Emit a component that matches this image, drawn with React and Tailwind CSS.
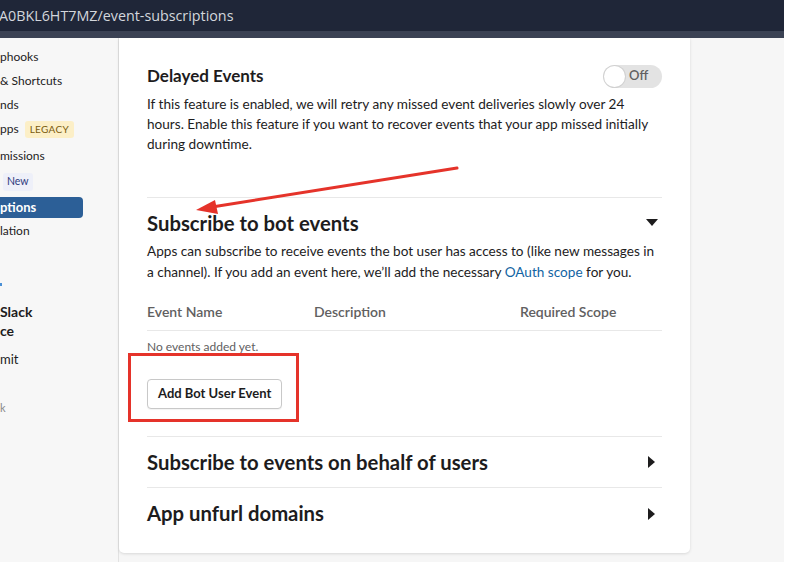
import { useState } from "react"

function Toggle({ on = false }) {
  return (
    <div className="relative flex h-[23px] w-[59px] items-center rounded-full bg-[#e3e3e3]">
      <span className="absolute left-[1px] top-[1px] h-[21px] w-[21px] rounded-full bg-white shadow-[0_0_0_1px_rgba(0,0,0,0.08)]" />
      <span className="ml-[26px] text-[13px] font-semibold text-[#616061]">{on ? "On" : "Off"}</span>
    </div>
  )
}

function Caret({ open }) {
  return open ? (
    <svg width="12" height="8" viewBox="0 0 12 8">
      <path d="M0 0h12L6 7z" fill="#1d1c1d" />
    </svg>
  ) : (
    <svg width="8" height="12" viewBox="0 0 8 12">
      <path d="M0 0v12l7-6z" fill="#1d1c1d" />
    </svg>
  )
}

function SideItem({ children, className = "" }) {
  return <div className={"flex h-[24px] items-center whitespace-nowrap text-[12px] text-[#1d1c1d] " + className}>{children}</div>
}

function Sidebar() {
  return (
    <aside className="w-[119px] shrink-0 overflow-hidden border-r border-[#e2e2e2] bg-[#f7f7f7] pt-[7px]">
      <SideItem>phooks</SideItem>
      <SideItem>&amp; Shortcuts</SideItem>
      <SideItem>nds</SideItem>
      <SideItem className="gap-[6px]">
        <span>pps</span>
        <span className="rounded-[3px] bg-[#fcefc7] px-[5px] py-[1px] text-[10px] tracking-[0.3px] text-[#7a5b0d]">LEGACY</span>
      </SideItem>
      <SideItem className="mt-[3px]">missions</SideItem>
      <SideItem className="mt-[2px]">
        <span className="ml-[3px] rounded-[3px] bg-[#eef0f9] px-[4px] py-[1px] text-[10.5px] text-[#2e3c80]">New</span>
      </SideItem>
      <div className="mt-[3px] flex h-[21px] w-[83px] items-center rounded-r-[4px] bg-[#2c5f97] text-[13px] font-bold text-white">ptions</div>
      <SideItem className="mt-[1px]">lation</SideItem>
      <div className="mt-[40px] h-[3px] w-[2px] bg-[#4a90d6]" />
      <div className="mt-[16px] text-[14px] font-bold leading-[19px] text-[#1d1c1d]">
        <div>Slack</div>
        <div>ce</div>
      </div>
      <SideItem className="mt-[8px] text-[13px]">mit</SideItem>
      <div className="mt-[28px] text-[11px] text-[#8a8a8a]">k</div>
    </aside>
  )
}

function Row({ title, last = false }) {
  return (
    <div className={"flex h-[51px] items-center justify-between " + (last ? "" : "border-b border-[#e8e8e8]")}>
      <h3 className="text-[20.3px] font-bold text-[#1d1c1d]">{title}</h3>
      <span className="mr-[6px]"><Caret open={false} /></span>
    </div>
  )
}

export default function App() {
  const [events] = useState([])

  return (
    <div className="relative h-[562px] w-[796px] overflow-hidden bg-white font-['Lato',sans-serif]">
      <div className="flex h-full w-[784px] flex-col">
        <div className="flex h-[31px] items-center bg-[#1f2638] font-['Open_Sans',sans-serif] text-[14.3px] text-[#d3d6dc]">
          <span className="-ml-[1px]">A0BKL6HT7MZ/event-subscriptions</span>
        </div>
        <div className="h-[7px] bg-[#3b4254]" />

        <div className="flex flex-1 overflow-hidden">
          <Sidebar />

          <main className="flex-1 bg-[#f6f6f6]">
            <div className="h-[515px] w-[571px] rounded-b-[5px] bg-white px-[28px] pt-[26px] shadow-[0_1px_3px_rgba(0,0,0,0.12)]">
              <section className="border-b border-[#e8e8e8] pb-[43px]">
                <div className="flex h-[24px] items-center justify-between">
                  <h3 className="text-[17px] font-bold text-[#1d1c1d]">Delayed Events</h3>
                  <Toggle />
                </div>
                <p className="mt-[6px] text-[13.6px] leading-[20px] text-[#1d1c1d]">
                  If this feature is enabled, we will retry any missed event deliveries slowly over 24 hours. Enable this feature if you want to recover events that your app missed initially during downtime.
                </p>
              </section>

              <section className="border-b border-[#e8e8e8] pb-[27px]">
                <div className="mt-[11px] flex h-[28px] items-center justify-between">
                  <h3 className="text-[20.3px] font-bold text-[#1d1c1d]">Subscribe to bot events</h3>
                  <span className="mr-[4px]"><Caret open /></span>
                </div>
                <p className="mt-[4px] text-[13.6px] leading-[21px] text-[#1d1c1d]">
                  Apps can subscribe to receive events the bot user has access to (like new messages in a channel). If you add an event here, we’ll add the necessary <span className="text-[#1264a3]">OAuth scope</span> for you.
                </p>

                <div className="mt-[19px] grid grid-cols-[167px_206px_1fr] border-b border-[#e8e8e8] pb-[8px] text-[14px] font-semibold leading-[20px] text-[#616061]">
                  <span>Event Name</span>
                  <span>Description</span>
                  <span>Required Scope</span>
                </div>
                {events.length === 0 && (
                  <p className="mt-[8px] text-[12px] leading-[16px] text-[#616061]">No events added yet.</p>
                )}
                <button className="mt-[24px] h-[30px] rounded-[4px] border border-[#c8c8c8] bg-white px-[10px] text-[13px] font-bold text-[#1d1c1d] shadow-[0_1px_1px_rgba(0,0,0,0.05)]">
                  Add Bot User Event
                </button>
              </section>

              <Row title="Subscribe to events on behalf of users" />
              <Row title="App unfurl domains" last />
            </div>
          </main>
        </div>
      </div>

      {/* annotations drawn over the screenshot */}
      <svg className="pointer-events-none absolute left-0 top-0" width="796" height="562">
        <line x1="457" y1="168" x2="212" y2="207" stroke="#e5332a" strokeWidth="3" strokeLinecap="round" />
        <polygon points="196,210 218,214 215,200" fill="#e5332a" />
        <rect x="129.5" y="354.5" width="168" height="66" fill="none" stroke="#e5332a" strokeWidth="3" />
      </svg>
    </div>
  )
}
